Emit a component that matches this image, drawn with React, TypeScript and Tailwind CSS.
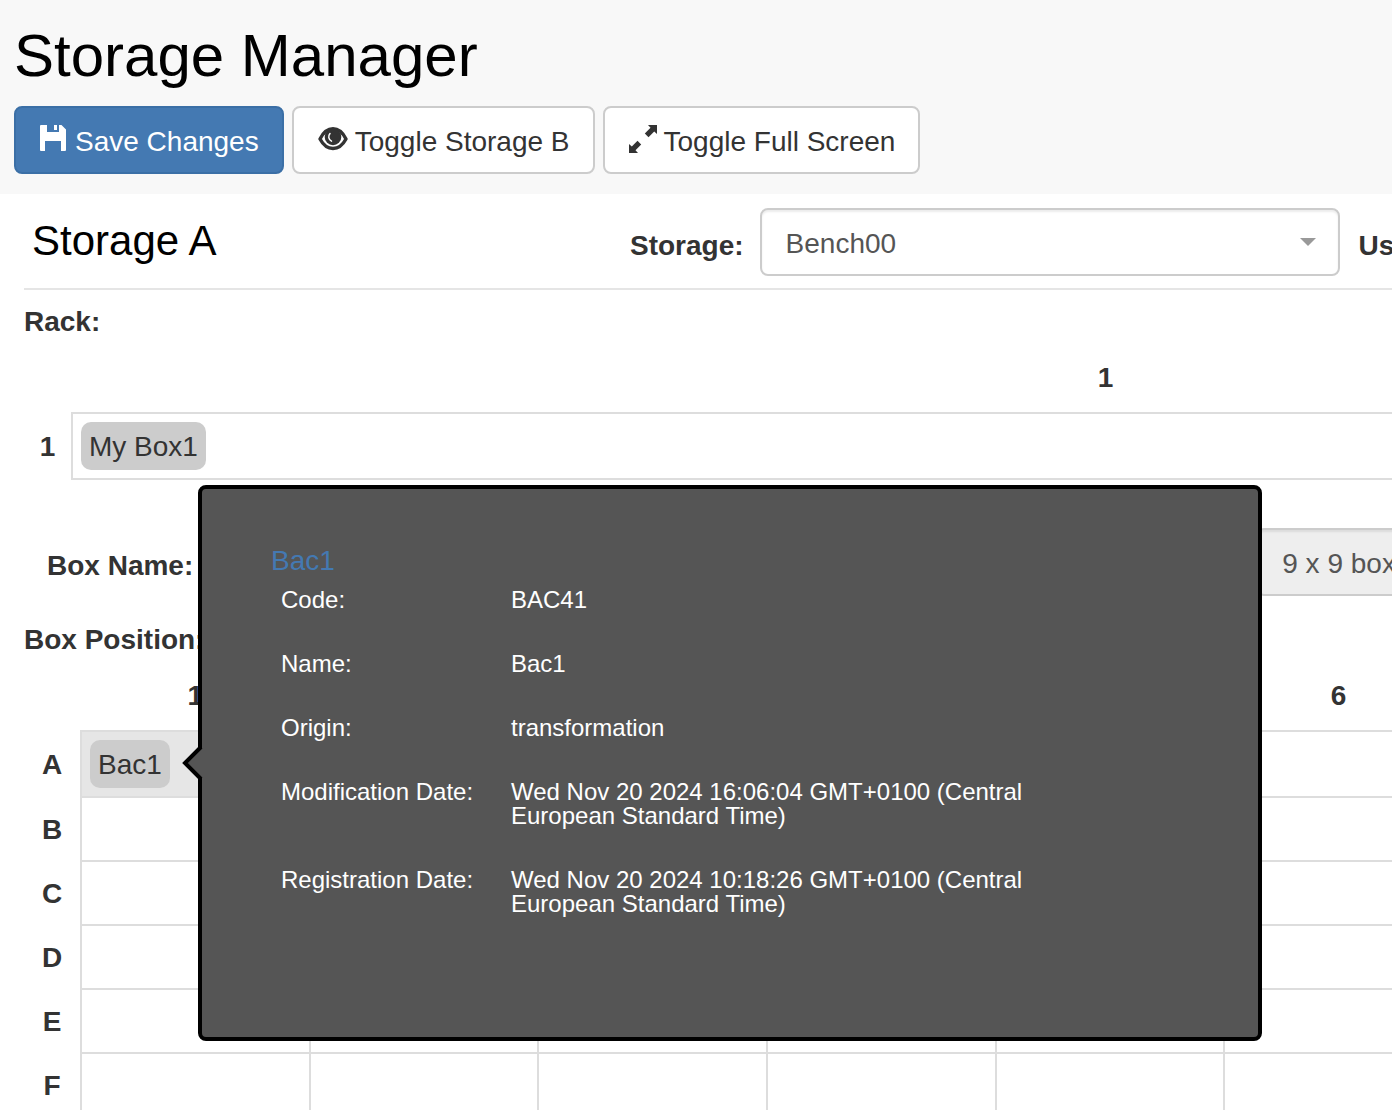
import type { ReactElement, ReactNode } from "react";

const BOX_COLUMNS = [1, 2, 3, 4, 5, 6, 7, 8, 9];
const BOX_ROWS = ["A", "B", "C", "D", "E", "F", "G", "H", "I"];

const DETAILS = [
  { label: "Code:", value: "BAC41" },
  { label: "Name:", value: "Bac1" },
  { label: "Origin:", value: "transformation" },
  { label: "Modification Date:", value: "Wed Nov 20 2024 16:06:04 GMT+0100 (Central European Standard Time)" },
  { label: "Registration Date:", value: "Wed Nov 20 2024 10:18:26 GMT+0100 (Central European Standard Time)" },
];

function SaveIcon(): ReactElement {
  return (
    <svg viewBox="0 0 28 28" className="-mt-1.5 size-7 shrink-0" fill="currentColor" aria-hidden="true">
      <path d="M1 0H7V7H19V0H21.500L26 4.500V25Q26 26 25 26H21V16H5V26H1Q0 26 0 25V1Q0 0 1 0Z" />
      <path d="M14 0H17V5H14Z" />
    </svg>
  );
}

function EyeIcon(): ReactElement {
  return (
    <svg viewBox="0 0 30 28" className="-mt-1.5 h-7 w-[30px] shrink-0" fill="none" stroke="currentColor" aria-hidden="true">
      <path
        d="M2 14C5.500 7 10 3.800 15 3.800C20 3.800 24.500 7 28 14C24.500 20.500 20 23.500 15 23.500C10 23.500 5.500 20.500 2 14Z"
        strokeWidth="3.400"
        strokeLinejoin="round"
      />
      <circle cx="15" cy="12" r="8.300" fill="currentColor" stroke="none" />
      <path d="M12 8.500C9.800 11 10.500 14.500 13.500 16.200" stroke="#fff" strokeWidth="1.500" strokeLinecap="round" />
    </svg>
  );
}

function ResizeIcon(): ReactElement {
  return (
    <svg viewBox="0 0 28 28" className="-mt-1.5 size-7 shrink-0" fill="currentColor" aria-hidden="true">
      <path d="M19 0H28V9L25.200 6.500L19.500 12.200L15.800 8.500L21.500 2.800Z" />
      <path d="M9 28H0V19L2.800 21.500L8.500 15.800L12.200 19.500L6.500 25.200Z" />
    </svg>
  );
}

function ToolbarButton({ icon, primary, children }: { icon: ReactNode; primary?: boolean; children: ReactNode }): ReactElement {
  return (
    <button
      type="button"
      className={
        primary
          ? "flex items-center gap-[7px] rounded-lg border-2 border-[#3b6fa6] bg-[#4479b2] pt-3.5 pr-[23px] pb-2.5 pl-6 text-white"
          : "flex items-center gap-[7px] rounded-lg border-2 border-[#ccc] bg-white pt-3.5 pr-[23px] pb-2.5 pl-6 text-[#333]"
      }
    >
      {icon}
      {children}
    </button>
  );
}

function StoredItem({ children }: { children: ReactNode }): ReactElement {
  return <div className="w-fit rounded-[10px] bg-[#ccc] px-2 pt-[5px] pb-[3px]">{children}</div>;
}

function SampleTooltip(): ReactElement {
  return (
    <div
      role="tooltip"
      className="absolute -top-[255px] left-[108px] z-10 h-[556px] w-[1064px] rounded-lg border-4 border-black bg-[#555] px-[69px] pt-[52px] text-left font-normal"
    >
      <svg viewBox="0 0 22 36" className="absolute top-[256px] -left-[21px] h-9 w-[22px]" aria-hidden="true">
        <path d="M22 2L5 18L22 34Z" fill="#555" />
        <path d="M20 2L4 18L20 34" fill="none" stroke="#000" strokeWidth="4" />
      </svg>
      <a href="#bac1" className="text-[#4479b2]">
        Bac1
      </a>
      <dl className="ml-2.5 pt-[7px] text-2xl/6 text-white">
        {DETAILS.map((detail) => (
          <div key={detail.label} className="mb-10 flex">
            <dt className="w-[230px] shrink-0">{detail.label}</dt>
            <dd className="w-[530px]">{detail.value}</dd>
          </div>
        ))}
      </dl>
    </div>
  );
}

function RackTable(): ReactElement {
  return (
    <table className="w-full table-fixed border-collapse">
      <thead>
        <tr className="h-[71px]">
          <th className="w-12" />
          <th className="pt-0.5">1</th>
        </tr>
      </thead>
      <tbody>
        <tr>
          <th className="pt-0.5">1</th>
          <td className="border-2 border-[#ddd] p-2">
            <StoredItem>My Box1</StoredItem>
          </td>
        </tr>
      </tbody>
    </table>
  );
}

function BoxTable(): ReactElement {
  return (
    <table className="w-full table-fixed border-collapse">
      <thead>
        <tr className="h-[71px]">
          <th className="w-[57px]" />
          {BOX_COLUMNS.map((column) => (
            <th key={column} className="pt-0.5">
              {column}
            </th>
          ))}
        </tr>
      </thead>
      <tbody>
        {BOX_ROWS.map((row) => (
          <tr key={row} className="h-16">
            <th className="pt-0.5">{row}</th>
            {BOX_COLUMNS.map((column) =>
              row === "A" && column === 1 ? (
                <td key={column} className="border-2 border-[#ddd] bg-[#e6e6e6] p-2">
                  <div className="relative">
                    <StoredItem>Bac1</StoredItem>
                    <SampleTooltip />
                  </div>
                </td>
              ) : (
                <td key={column} className="border-2 border-[#ddd]" />
              ),
            )}
          </tr>
        ))}
      </tbody>
    </table>
  );
}

export default function App(): ReactElement {
  return (
    <div className="h-screen overflow-hidden bg-white font-['Liberation_Sans',Arial,sans-serif] text-[28px]/10 text-[#333]">
      <header className="bg-[#f8f8f8] px-3.5 pt-[23px] pb-5">
        <h1 className="text-[60px]/[66px] text-black">Storage Manager</h1>
        <div className="mt-[17px] flex gap-2">
          <ToolbarButton icon={<SaveIcon />} primary>
            Save Changes
          </ToolbarButton>
          <ToolbarButton icon={<EyeIcon />}>Toggle Storage B</ToolbarButton>
          <ToolbarButton icon={<ResizeIcon />}>Toggle Full Screen</ToolbarButton>
        </div>
      </header>

      <main className="ml-6 min-w-[2116px] pt-3.5">
        <div className="flex items-center border-b-2 border-[#e5e5e5] pb-3">
          <h2 className="w-[606px] pb-0.5 pl-2 text-[42px]/[46px] text-black">Storage A</h2>
          <label htmlFor="storage" className="mr-4 pt-2 font-bold">
            Storage:
          </label>
          <div className="relative w-[580px]">
            <select
              id="storage"
              className="h-[68px] w-full appearance-none rounded-lg border-2 border-[#ccc] bg-white px-6 pt-1 text-[#555] shadow-[inset_0_2px_2px_rgba(0,0,0,0.075)]"
            >
              <option>Bench00</option>
            </select>
            <span className="pointer-events-none absolute top-[30px] right-6 border-x-8 border-t-8 border-x-transparent border-t-[#999]" />
          </div>
          <span className="ml-[19px] pt-2 font-bold">User Id:</span>
        </div>

        <p className="mt-3 font-bold">Rack:</p>
        <RackTable />

        <div className="mt-12 flex items-center pl-[23px]">
          <label htmlFor="box-name" className="mr-4 pt-2 font-bold">
            Box Name:
          </label>
          <input
            id="box-name"
            defaultValue="My Box1"
            className="h-[68px] w-[580px] rounded-lg border-2 border-[#ccc] px-6 text-[#555]"
          />
          <label htmlFor="box-size" className="w-[467px] pt-2 pr-4 text-right font-bold">
            Box Size:
          </label>
          <select
            id="box-size"
            disabled
            className="h-[68px] w-[580px] appearance-none rounded-lg border-2 border-[#ccc] bg-[#eee] px-6 pt-1 text-[#555] opacity-100 shadow-[inset_0_2px_2px_rgba(0,0,0,0.075)]"
          >
            <option>9 x 9 box</option>
          </select>
        </div>

        <p className="mt-6 font-bold">Box Position:</p>
        <BoxTable />
      </main>
    </div>
  );
}
